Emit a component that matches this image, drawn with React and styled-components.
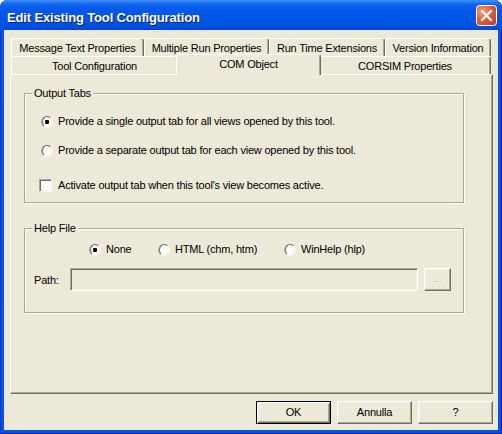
import React from 'react';
import styled, { createGlobalStyle } from 'styled-components';

const Global = createGlobalStyle`
  html, body { margin: 0; padding: 0; background: #ffffff; }
  body {
    font-family: "Liberation Sans", Arial, sans-serif;
    font-size: 11px;
    color: #000;
  }
  * { box-sizing: border-box; }
`;

const Window = styled.div`
  width: 502px;
  height: 434px;
  display: flex;
  flex-direction: column;
  background: #0055e5;
  border-radius: 8px 8px 0 0;
  overflow: hidden;
  box-shadow: inset 1px 0 #0831d9, inset -1px 0 #001ea0, inset 0 -1px #001ea0;
`;

const TitleBar = styled.div`
  height: 30px;
  flex: none;
  display: flex;
  align-items: flex-start;
  justify-content: space-between;
  padding: 0 5px 0 7px;
  background: linear-gradient(
    to bottom,
    #3d8ff9 0px,
    #2b7cf6 2px,
    #0d63ee 5px,
    #0659e8 10px,
    #0055e5 20px,
    #0052e0 26px,
    #0046d3 30px
  );
`;

const Title = styled.div`
  padding-top: 10px;
  color: #ffffff;
  font-family: "Liberation Sans", Arial, sans-serif;
  font-weight: bold;
  font-size: 13px;
  line-height: 15px;
  letter-spacing: -0.15px;
  text-shadow: 1px 1px 0 #0a1a8a;
  white-space: nowrap;
`;

const CloseButton = styled.div`
  margin-top: 5px;
  width: 21px;
  height: 21px;
  flex: none;
`;

const Client = styled.div`
  flex: 1;
  margin: 0 4px 4px;
  background: #ece9d8;
  display: flex;
  flex-direction: column;
  padding: 8px 5px 6px 6px;
`;

const TabStrip = styled.div`
  display: flex;
  flex-direction: column;
  padding: 0 2px 0 1px;
  flex: none;
`;

const TabRow = styled.div`
  display: flex;
  height: 18px;
`;

const Tab = styled.div`
  flex: 0 0 ${p => (p.$selected ? p.$w + 4 : p.$w)}px;
  height: ${p => (p.$selected ? 21 : 18)}px;
  margin: ${p => (p.$selected ? '-2px -2px -1px' : '0')};
  position: relative;
  z-index: ${p => (p.$selected ? 2 : 1)};
  display: flex;
  align-items: center;
  justify-content: center;
  padding-bottom: ${p => (p.$selected ? 3 : 0)}px;
  background: #ece9d8;
  border-left: 1px solid #ffffff;
  border-top: 1px solid #ffffff;
  border-right: 1px solid #716f64;
  border-radius: 3px 3px 0 0;
  box-shadow: inset -1px 0 #aca899;
  letter-spacing: -0.2px;
  white-space: nowrap;
`;

const Panel = styled.div`
  flex: 1;
  display: flex;
  flex-direction: column;
  padding: 18px 27px 0 13px;
  border: 1px solid;
  border-color: #ffffff #716f64 #716f64 #ffffff;
  box-shadow: inset -1px -1px #aca899;
`;

const GroupBox = styled.div`
  position: relative;
  width: 440px;
  margin-top: ${p => p.$mt || 0}px;
  padding: ${p => p.$pad};
  border: 1px solid #aca899;
  box-shadow: 1px 1px 0 #ffffff, inset 1px 1px 0 #ffffff;
  display: flex;
  flex-direction: column;
`;

const GroupTitle = styled.span`
  position: absolute;
  top: -7px;
  left: 7px;
  padding: 0 2px;
  line-height: 13px;
  background: #ece9d8;
  letter-spacing: -0.2px;
`;

const OptionRow = styled.div`
  display: flex;
  align-items: center;
  height: 13px;
  margin-top: ${p => p.$mt || 0}px;
  padding-left: ${p => p.$pl || 0}px;
`;

const Option = styled.label`
  display: flex;
  align-items: center;
  gap: ${p => p.$gap || 5}px;
  flex: ${p => (p.$w ? `0 0 ${p.$w}px` : '1')};
  margin-left: ${p => p.$ml || 0}px;
  line-height: 13px;
  letter-spacing: -0.2px;
  white-space: nowrap;
`;

const Radio = styled.span`
  flex: none;
  width: 12px;
  height: 12px;
  border-radius: 50%;
  border: 1px solid;
  border-color: #aca899 #ffffff #ffffff #aca899;
  display: flex;
  align-items: center;
  justify-content: center;
  &::before {
    content: '';
    width: 10px;
    height: 10px;
    border-radius: 50%;
    border: 1px solid;
    border-color: #716f64 #f1efe2 #f1efe2 #716f64;
    background: ${p =>
      p.$checked
        ? 'radial-gradient(circle at 50% 50%, #000 0 2px, #fff 2.4px)'
        : '#ffffff'};
  }
`;

const Checkbox = styled.span`
  flex: none;
  width: 13px;
  height: 13px;
  border: 1px solid;
  border-color: #aca899 #ffffff #ffffff #aca899;
  background: #ffffff;
  box-shadow: inset 1px 1px #716f64, inset -1px -1px #f1efe2;
`;

const PathRow = styled.div`
  display: flex;
  align-items: center;
  margin-top: 12px;
  padding-left: 9px;
`;

const PathLabel = styled.span`
  flex: 0 0 36px;
  letter-spacing: -0.2px;
`;

const PathInput = styled.div`
  flex: 0 0 348px;
  height: 23px;
  border: 1px solid;
  border-color: #aca899 #ffffff #ffffff #aca899;
  box-shadow: inset 1px 1px #716f64, inset -1px -1px #f1efe2;
  background: #ece9d8;
`;

const BrowseButton = styled.div`
  flex: 0 0 27px;
  height: 23px;
  margin-left: 6px;
  display: flex;
  align-items: center;
  justify-content: center;
  border: 1px solid;
  border-color: #ffffff #716f64 #716f64 #ffffff;
  box-shadow: inset -1px -1px #aca899, inset 1px 1px #f1efe2;
  color: #aca899;
  text-shadow: 1px 1px 0 #ffffff;
  font-size: 9px;
  padding-bottom: 1px;
`;

const ButtonRow = styled.div`
  display: flex;
  justify-content: flex-end;
  gap: 6px;
  margin-top: 7px;
  flex: none;
`;

const Button = styled.div`
  width: 75px;
  height: 23px;
  display: flex;
  align-items: center;
  justify-content: center;
  padding-bottom: 2px;
  letter-spacing: -0.2px;
  border: 1px solid;
  border-color: ${p => (p.$default ? '#000 #000 #000 #000' : '#ffffff #716f64 #716f64 #ffffff')};
  box-shadow: ${p =>
    p.$default
      ? 'inset 1px 1px #ffffff, inset -1px -1px #716f64, inset 2px 2px #f1efe2, inset -2px -2px #aca899'
      : 'inset -1px -1px #aca899, inset 1px 1px #f1efe2'};
`;

const CloseIcon = () => (
  <svg width="21" height="21" viewBox="0 0 21 21">
    <defs>
      <radialGradient id="cg" cx="0.3" cy="0.3" r="0.9">
        <stop offset="0" stopColor="#f3a286" />
        <stop offset="0.45" stopColor="#e3613a" />
        <stop offset="1" stopColor="#c2401a" />
      </radialGradient>
    </defs>
    <rect x="0.5" y="0.5" width="20" height="20" rx="3" ry="3" fill="url(#cg)" stroke="#ffffff" strokeWidth="1" />
    <path d="M6 6 L15 15 M15 6 L6 15" stroke="#ffffff" strokeWidth="2.2" strokeLinecap="square" />
  </svg>
);

const row1 = [
  { label: 'Message Text Properties', w: 133 },
  { label: 'Multiple Run Properties', w: 125 },
  { label: 'Run Time Extensions', w: 116 },
  { label: 'Version Information', w: 106 },
];
const row2 = [
  { label: 'Tool Configuration', w: 167 },
  { label: 'COM Object', w: 141, selected: true },
  { label: 'CORSIM Properties', w: 172 },
];

export default function App() {
  return (
    <>
      <Global />
      <Window>
        <TitleBar>
          <Title>Edit Existing Tool Configuration</Title>
          <CloseButton>
            <CloseIcon />
          </CloseButton>
        </TitleBar>
        <Client>
          <TabStrip>
            <TabRow>
              {row1.map(t => (
                <Tab key={t.label} $w={t.w}>{t.label}</Tab>
              ))}
            </TabRow>
            <TabRow>
              {row2.map(t => (
                <Tab key={t.label} $w={t.w} $selected={t.selected}>{t.label}</Tab>
              ))}
            </TabRow>
          </TabStrip>
          <Panel>
            <GroupBox $pad="21px 0 10px 16px">
              <GroupTitle>Output Tabs</GroupTitle>
              <OptionRow>
                <Option>
                  <Radio $checked />
                  Provide a single output tab for all views opened by this tool.
                </Option>
              </OptionRow>
              <OptionRow $mt={16}>
                <Option>
                  <Radio />
                  Provide a separate output tab for each view opened by this tool.
                </Option>
              </OptionRow>
              <OptionRow $mt={22}>
                <Option $ml={-2} $gap={6}>
                  <Checkbox />
                  Activate output tab when this tool's view becomes active.
                </Option>
              </OptionRow>
            </GroupBox>
            <GroupBox $mt={25} $pad="14px 0 21px 0">
              <GroupTitle>Help File</GroupTitle>
              <OptionRow $pl={64}>
                <Option $w={69}>
                  <Radio $checked />
                  None
                </Option>
                <Option $w={126}>
                  <Radio />
                  HTML (chm, htm)
                </Option>
                <Option>
                  <Radio />
                  WinHelp (hlp)
                </Option>
              </OptionRow>
              <PathRow>
                <PathLabel>Path:</PathLabel>
                <PathInput />
                <BrowseButton>...</BrowseButton>
              </PathRow>
            </GroupBox>
          </Panel>
          <ButtonRow>
            <Button $default>OK</Button>
            <Button>Annulla</Button>
            <Button>?</Button>
          </ButtonRow>
        </Client>
      </Window>
    </>
  );
}
